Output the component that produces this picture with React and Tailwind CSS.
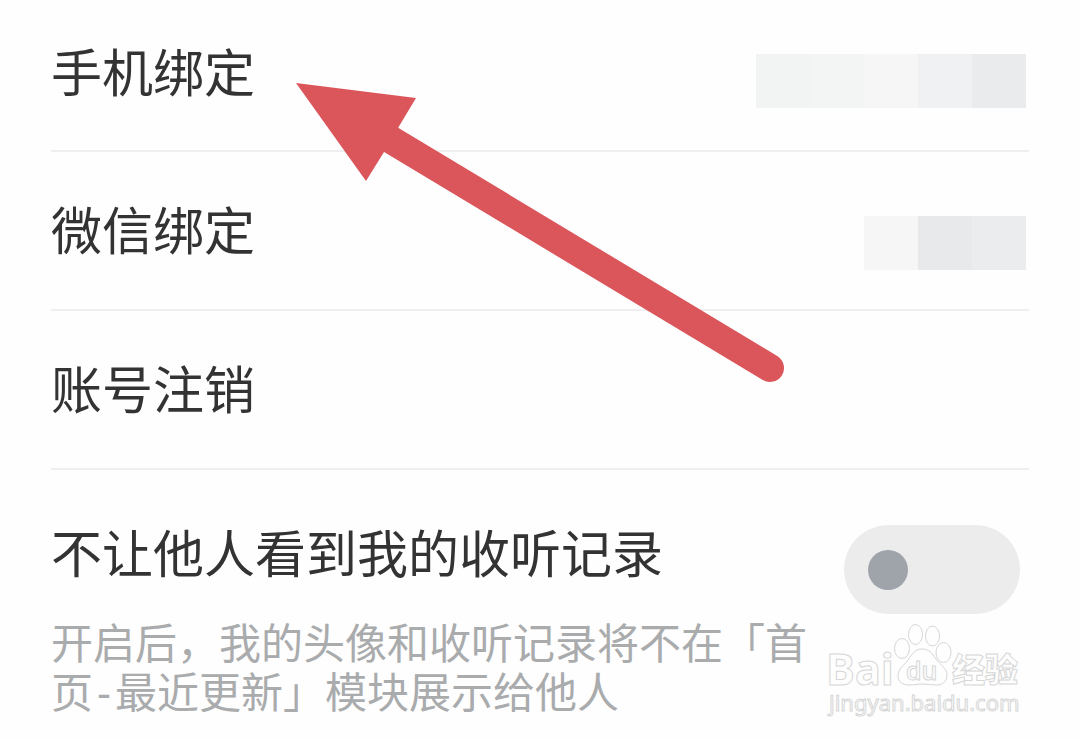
import React, { useState } from "react";

const rows = [
  {
    label: "手机绑定",
    spacing: "min-h-[150px] pt-[43px]",
    maskOffset: "mt-[11px]",
    mask: ["bg-[#f2f3f3]", "bg-[#f3f4f4]", "bg-[#f6f6f6]", "bg-[#f0f1f3]", "bg-[#eaebed]"],
  },
  {
    label: "微信绑定",
    spacing: "min-h-[157px] pt-[49px]",
    maskOffset: "mt-[15px]",
    mask: ["bg-[#f6f6f6]", "bg-[#e8e9ea]", "bg-[#ebecee]"],
  },
  { label: "账号注销", spacing: "min-h-[157px] pt-[49px]", maskOffset: "", mask: [] },
];

function SettingRow({ row }) {
  return (
    <li className="border-b-2 border-[#efefef]">
      <button
        type="button"
        className={`flex w-full items-start justify-between text-left ${row.spacing}`}
      >
        <span className="text-[51px] leading-[64px]">{row.label}</span>
        <span className={`flex pr-[3px] ${row.maskOffset}`}>
          {row.mask.map((color, i) => (
            <span key={i} className={`size-[54px] ${color}`} />
          ))}
        </span>
      </button>
    </li>
  );
}

function PrivacyRow() {
  const [hidden, setHidden] = useState(false);

  return (
    <section className="flex items-start justify-between pt-[54px]">
      <div className="max-w-[760px]">
        <label htmlFor="hide-history" className="block text-[51px] leading-[64px]">
          不让他人看到我的收听记录
        </label>
        <p id="hide-history-hint" className="mt-8 text-[42px] leading-[49px] text-[#a9abad]">
          开启后，我的头像和收听记录将不在「首页<span className="mx-1">-</span>最近更新」模块展示给他人
        </p>
      </div>
      <input
        id="hide-history"
        type="checkbox"
        role="switch"
        aria-describedby="hide-history-hint"
        checked={hidden}
        onChange={(e) => setHidden(e.target.checked)}
        className="mt-px mr-[9px] flex h-[89px] w-[176px] shrink-0 appearance-none items-center rounded-full bg-[#ececec] px-6 before:size-10 before:rounded-full before:bg-[#9fa4aa] checked:justify-end"
      />
    </section>
  );
}

function Arrow() {
  return (
    <svg
      className="pointer-events-none absolute top-[83px] left-[296px]"
      width="490"
      height="302"
      viewBox="0 0 490 302"
      fill="#db565b"
      aria-hidden="true"
    >
      <path d="M0 0 120 15 102 45 88 69 70 98Z" />
      <path d="M92 55 474 285" stroke="#db565b" strokeWidth="28" strokeLinecap="round" />
    </svg>
  );
}

function Watermark() {
  return (
    <svg
      className="pointer-events-none absolute top-[620px] right-[50px]"
      width="210"
      height="100"
      viewBox="0 0 210 100"
      fill="#fefefe"
      stroke="#d6d6d6"
      strokeWidth="1"
      fontFamily="'Open Sans', 'Noto Sans CJK SC', sans-serif"
      role="img"
      aria-label="Baidu 经验"
    >
      <text x="6" y="65" fontSize="43" fontWeight="700">
        Bai
      </text>
      <ellipse cx="95.5" cy="14.5" rx="7" ry="10" />
      <ellipse cx="112.5" cy="16" rx="7" ry="10" />
      <ellipse cx="82" cy="28.5" rx="7.5" ry="10" />
      <ellipse cx="123.5" cy="32.5" rx="7.5" ry="10" />
      <path d="M102 29C95 29 92 34 88 40C84 46 78 48 78 56C78 62 83 65 89 65C94 65 98 64 102 64C107 64 112 65 117 65C123 65 127 61 127 55C127 48 120 45 116 39C112 33 109 29 102 29Z" />
      <text x="86" y="60" fontSize="25" fontWeight="600">
        du
      </text>
      <text x="132" y="62" fontSize="33" fontWeight="900">
        经验
      </text>
      <text x="9" y="91" fontSize="22" fontFamily="'Noto Sans', sans-serif">
        jingyan.baidu.com
      </text>
    </svg>
  );
}

export default function App() {
  return (
    <main className="relative min-h-screen overflow-hidden bg-[#fefefe] px-[51px] font-['Liberation_Sans','Noto_Sans_CJK_SC',sans-serif] text-[#333333]">
      <ul>
        {rows.map((row) => (
          <SettingRow key={row.label} row={row} />
        ))}
      </ul>
      <PrivacyRow />
      <Arrow />
      <Watermark />
    </main>
  );
}
